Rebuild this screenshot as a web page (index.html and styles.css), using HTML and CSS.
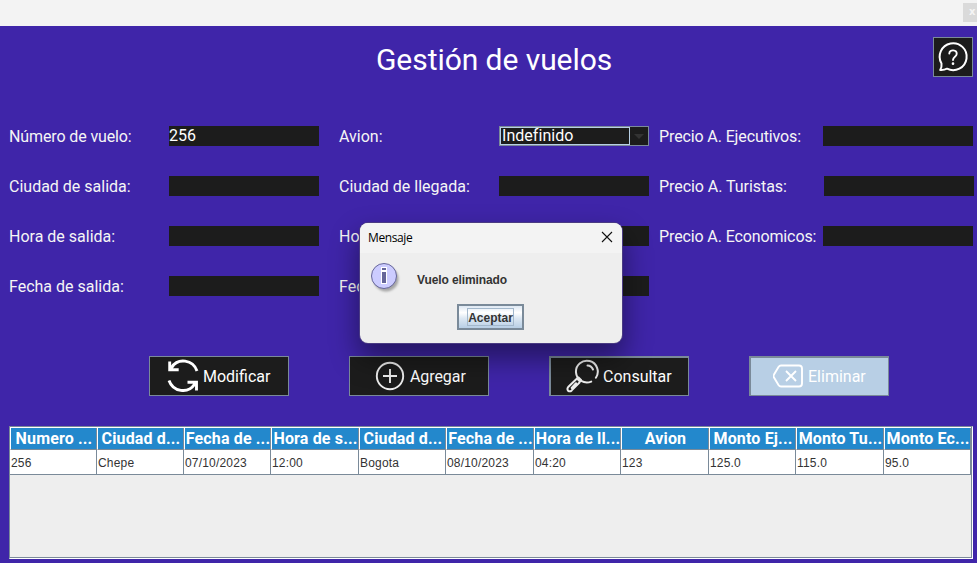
FILE: index.html
```
<!DOCTYPE html>
<html lang="es">
<head>
<meta charset="utf-8">
<title>Gestión de vuelos</title>
<link rel="stylesheet" href="styles.css">
</head>
<body>
<div class="topbar"><span class="close-tab">x</span></div>
<header class="header">
  <h1>Gestión de vuelos</h1>
  <button class="help" aria-label="Ayuda">
    <svg width="38" height="38" viewBox="0 0 38 38" fill="none" stroke="#fff" stroke-width="2" stroke-linecap="round" stroke-linejoin="round"><path d="M7.500 25.500A13.500 13.500 0 1 1 13 30.700Q10 32.300 6.200 32Q8 29 7.500 25.500Z"/><path stroke-width="1.900" d="M15.300 15.500C15.500 11 23 11.500 22.700 16C22.500 19 19 18.500 19 22"/><path stroke-width="2.600" d="M19 25.500v.2"/></svg>
  </button>
</header>
<main>
  <div class="form">
    <label>Número de vuelo:</label><div class="field">256</div>
    <label>Avion:</label><div class="combo"><span>Indefinido</span><i></i></div>
    <label>Precio A. Ejecutivos:</label><div class="field"></div>
    <label>Ciudad de salida:</label><div class="field"></div>
    <label>Ciudad de llegada:</label><div class="field"></div>
    <label>Precio A. Turistas:</label><div class="field shifted"></div>
    <label>Hora de salida:</label><div class="field"></div>
    <label>Hora de llegada:</label><div class="field"></div>
    <label>Precio A. Economicos:</label><div class="field"></div>
    <label>Fecha de salida:</label><div class="field"></div>
    <label>Fecha de llegada:</label><div class="field"></div>
  </div>
  <div class="actions">
    <button><svg width="32" height="34" viewBox="0 0 32 34" fill="none" stroke="#fff" stroke-width="2.900"><path d="M30 12C26 .5 11 -1.500 4.500 8.500M2.700 2.500v8.200h9M2.700 10.500L6.500 6.500M2 21.500C6 33 21 35 27.500 25.500M29.500 31.500v-8.200h-9M29.500 23.500L25.500 27.500"/></svg><span>Modificar</span></button>
    <button><svg width="34" height="34" viewBox="0 0 34 34" fill="none" stroke="#eee" stroke-width="1.900"><circle cx="19" cy="17" r="13.200"/><path d="M19 10v14M12 17h14"/></svg><span>Agregar</span></button>
    <button class="thick"><svg width="34" height="34" viewBox="0 0 34 34" fill="none" stroke="#eee" stroke-width="2" stroke-linecap="round"><path d="M25.200 22.600A10.900 10.900 0 1 1 29.900 18.700"/><path d="M21.500 6.600Q25.500 6.800 27 10.500"/><path d="M10.500 20L2.200 28Q.7 30 2.200 31.800Q4 33 5.700 31.400L13.500 23.500M10 24.300L5.700 29M11 19.500L14 22.500M12.500 18.500L15 21"/></svg><span>Consultar</span></button>
    <button class="thick selected"><svg width="32" height="34" viewBox="0 0 32 34" fill="none" stroke="#fff" stroke-width="1.900" stroke-linejoin="round"><path d="M8 6.500H26Q29 6.500 29 9.500V24.500Q29 27.500 26 27.500H8Q6.500 27.500 5.500 26L1 18.500Q0 17 1 15.500L5.500 8Q6.500 6.500 8 6.500Z"/><path d="M13 12l10 10M23 12L13 22"/></svg><span>Eliminar</span></button>
  </div>
  <div class="scroll">
    <table>
      <colgroup><col class="a"><col class="b"><col class="b"><col class="c"><col class="b"><col class="c"><col class="b"><col class="c"><col class="b"><col class="c"><col class="b"></colgroup>
      <thead><tr><th>Numero ...</th><th>Ciudad d...</th><th>Fecha de ...</th><th>Hora de s...</th><th>Ciudad d...</th><th>Fecha de ...</th><th>Hora de ll...</th><th>Avion</th><th>Monto Ej...</th><th>Monto Tu...</th><th>Monto Ec...</th></tr></thead>
      <tbody><tr><td>256</td><td>Chepe</td><td>07/10/2023</td><td>12:00</td><td>Bogota</td><td>08/10/2023</td><td>04:20</td><td>123</td><td>125.0</td><td>115.0</td><td>95.0</td></tr></tbody>
    </table>
  </div>
</main>
<div class="dialog" role="dialog">
  <div class="dialog-title"><span>Mensaje</span><svg width="12" height="12" viewBox="0 0 12 12" stroke="#111" stroke-width="1.100"><path d="M1 1l10 10M11 1L1 11"/></svg></div>
  <div class="message">
    <svg width="32" height="32" viewBox="0 0 32 32"><defs><filter id="soft"><feGaussianBlur stdDeviation="1.200"/></filter></defs><circle cx="15" cy="17" r="12.500" fill="#777" opacity=".6" filter="url(#soft)"/><circle cx="13" cy="14" r="12.500" fill="#ccf" stroke="#669"/><path d="M10 5h6v17h-6z" fill="#fff"/><path d="M11 6h4v2h-4zM11 10h4v11h-4z" fill="#669"/></svg>
    <span>Vuelo eliminado</span>
  </div>
  <button class="accept"><span>Aceptar</span></button>
</div>
</body>
</html>
```
FILE: styles.css
```
* { box-sizing: border-box; }
body { margin: 0; height: 563px; overflow: hidden; background: #3f25a9; color: #fff; font: 16px Roboto, sans-serif; }
button { font: inherit; color: inherit; margin: 0; padding: 0; }
svg { display: block; flex: none; }
.topbar { height: 26px; background: #f3f3f3; display: flex; justify-content: flex-end; padding-top: 3px; }
.close-tab { width: 14px; height: 19px; background: #dadada; color: #f5f5f5; font: bold 10px/18px "DejaVu Sans", sans-serif; padding-left: 6px; overflow: hidden; }
.header { height: 100px; display: grid; grid-template-columns: 1fr 236px 1fr; padding: 11px 4px 0 15px; }
h1 { grid-column: 2; margin: 5px 0 0; font-size: 30px; line-height: 36px; font-weight: 400; letter-spacing: -.06px; white-space: nowrap; text-align: center; }
.help { width: 40px; height: 40px; justify-self: end; background: #1c1c1c; border: 1px solid #7a8a99; }
.form { display: grid; grid-template-columns: 160px 170px 160px 160px 164px 150px; grid-auto-rows: 20px; row-gap: 30px; padding-left: 9px; height: 230px; }
.form label { line-height: 21px; white-space: nowrap; color: #f5f5f5; }
.form label:first-child { letter-spacing: -.12px; }
.form label:nth-of-type(3n) { letter-spacing: -.12px; }
.form label:nth-of-type(6) { letter-spacing: -.05px; }
.field, .combo { width: 150px; height: 20px; background: #1c1c1c; line-height: 19px; }
.shifted { margin-left: 1px; }
.combo { display: flex; border: 1px solid #7a8a99; }
.combo span { width: 130px; border: 1px solid #b8cfe5; line-height: 16px; padding-left: 1px; letter-spacing: .04px; }
.combo i { margin: 7px 0 0 4px; width: 0; height: 0; border: 5px solid transparent; border-top-color: #333; }
.actions { display: flex; gap: 60px; padding-left: 149px; }
.actions button { width: 140px; height: 40px; display: flex; align-items: center; background: #1c1c1c; border: 1px solid #7a8a99; padding-left: 17px; gap: 4px; }
.actions button:nth-child(2) { padding-left: 21px; gap: 5px; letter-spacing: -.08px; }
.actions .thick { border-width: 2px 1px 1px 2px; padding-left: 15px; gap: 3px; }
.actions .selected { background: #b8cfe5; padding-left: 22px; gap: 3px; }
.actions .thick svg { margin-top: -1px; }
.scroll { width: 964px; height: 133px; margin: 30px 0 0 9px; background: #eee; border: 1px solid #7a8a99; border-right-color: #fff; border-bottom-color: #fff; box-shadow: inset -1px -1px #7a8a99; }
table { width: 961px; table-layout: fixed; border-collapse: separate; border-spacing: 0; }
.a, .b { width: 87px; }
.c { width: 88px; }
th { height: 23px; padding: 0; background: #2388cc; border: 1px solid #fff; border-width: 1px 0 1px 1px; border-bottom-color: #7a8a99; box-shadow: inset -1px 0 #7a8a99; font-weight: 700; line-height: 21px; letter-spacing: .15px; white-space: nowrap; text-align: center; }
td { height: 25px; padding: 2px 0 0 1px; background: #fff; color: #333; border: solid #7a8a99; border-width: 0 1px 1px 0; font: 12px "Liberation Sans", Arial, sans-serif; letter-spacing: .18px; }
.dialog { position: absolute; left: 360px; top: 223px; width: 262px; height: 120px; border-radius: 8px; overflow: hidden; background: #eee; color: #333; box-shadow: 0 0 0 1px #4a3b83, 0 14px 28px 2px rgba(0, 0, 0, .42); }
.dialog-title { height: 30px; background: #f3f3f3; color: #000; display: flex; align-items: center; justify-content: space-between; padding: 0 9px 0 8px; font: 12px "Open Sans", "Noto Sans", sans-serif; letter-spacing: -.4px; }
.dialog-title span { margin-top: -2px; }
.dialog-title svg { margin-top: -2px; }
.message { display: flex; align-items: center; gap: 14px; height: 51px; padding: 0 0 1px 11px; font: bold 12px "Liberation Sans", Arial, sans-serif; letter-spacing: -.1px; }
.message span { margin-top: 3px; }
.accept { display: flex; align-items: center; justify-content: center; width: 67px; height: 26px; margin-left: 97px; border: 2px solid #7a8a99; background: linear-gradient(#dde8f3, #fff 30%, #dde8f3 55%, #b8cfe5); font: bold 12px "Liberation Sans", Arial, sans-serif; color: #333; }
.accept span { width: 47px; height: 18px; line-height: 18px; border: 1px solid #a3b8cc; white-space: nowrap; display: flex; justify-content: center; }
```
